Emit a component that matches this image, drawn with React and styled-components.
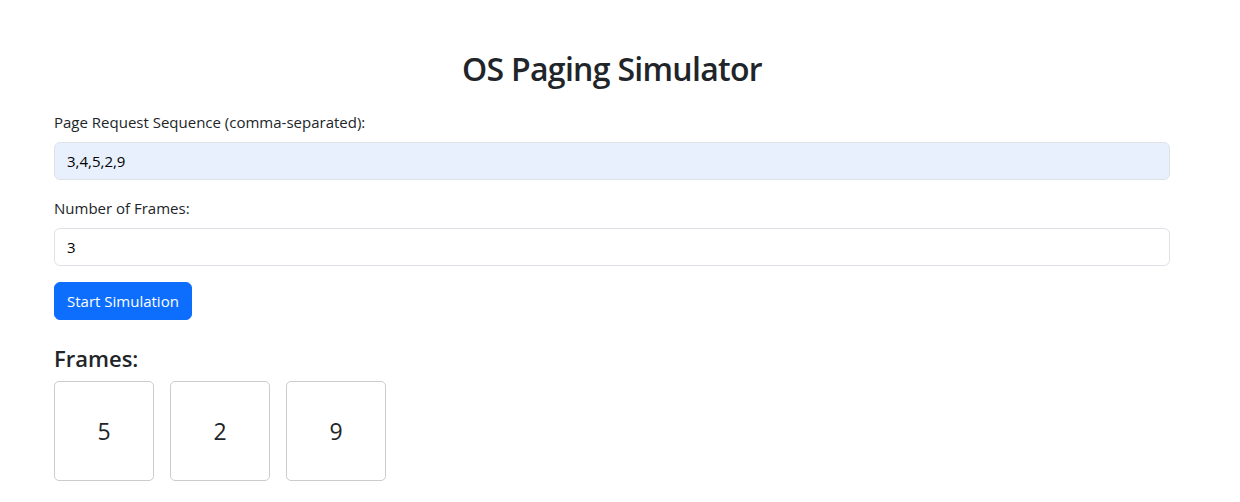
import { useState } from "react";
import styled, { createGlobalStyle } from "styled-components";

const GlobalStyle = createGlobalStyle`
  * {
    box-sizing: border-box;
  }
  body {
    margin: 0;
    background: #ffffff;
    color: #212529;
    font-family: "Open Sans", "Noto Sans", sans-serif;
    font-size: 16px;
    line-height: 1.5;
  }
`;

function App() {
  const [sequence, setSequence] = useState("3,4,5,2,9");
  const [frameCount, setFrameCount] = useState("3");
  const frames = [5, 2, 9];

  return (
    <Page>
      <GlobalStyle />
      <Container>
        <Title>OS Paging Simulator</Title>
        <Field>
          <Label>Page Request Sequence (comma-separated):</Label>
          <Input
            autofilled
            value={sequence}
            onChange={(e) => setSequence(e.target.value)}
          />
        </Field>
        <Field>
          <Label>Number of Frames:</Label>
          <Input
            value={frameCount}
            onChange={(e) => setFrameCount(e.target.value)}
          />
        </Field>
        <Button>Start Simulation</Button>
        <SectionTitle>Frames:</SectionTitle>
        <Frames>
          {frames.map((frame, i) => (
            <Frame key={i}>{frame}</Frame>
          ))}
        </Frames>
      </Container>
    </Page>
  );
}

export default App;

const Page = styled.div`
  width: 1224px;
  padding-top: 50px;
`;

const Container = styled.div`
  max-width: 1140px;
  margin: 0 auto;
  padding: 0 12px;
`;

const Title = styled.h2`
  margin: 0 0 22px;
  text-align: center;
  font-size: 32px;
  font-weight: 600;
  line-height: 38px;
  letter-spacing: -0.7px;
`;

const Field = styled.div`
  margin-bottom: 16px;
`;

const Label = styled.label`
  display: block;
  margin-bottom: 8px;
  font-size: 15px;
  line-height: 24px;
`;

const Input = styled.input`
  display: block;
  width: 100%;
  height: 38px;
  padding: 6px 12px;
  font-family: inherit;
  font-size: 15px;
  color: #000000;
  background: ${(props) => (props.autofilled ? "#e8f0fe" : "#ffffff")};
  border: 1px solid #dee2e6;
  border-radius: 6px;
  outline: none;
`;

const Button = styled.button`
  display: inline-block;
  height: 38px;
  padding: 6px 12px;
  font-family: inherit;
  font-size: 15px;
  line-height: 24px;
  color: #ffffff;
  background: #0d6efd;
  border: 1px solid #0d6efd;
  border-radius: 6px;
  cursor: pointer;
`;

const SectionTitle = styled.h4`
  margin: 24px 0 8px;
  font-size: 22px;
  font-weight: 600;
  line-height: 29px;
`;

const Frames = styled.div`
  display: flex;
  gap: 16px;
`;

const Frame = styled.div`
  width: 100px;
  height: 100px;
  display: flex;
  align-items: center;
  justify-content: center;
  border: 1px solid #cccccc;
  border-radius: 5px;
  font-size: 23px;
`;
